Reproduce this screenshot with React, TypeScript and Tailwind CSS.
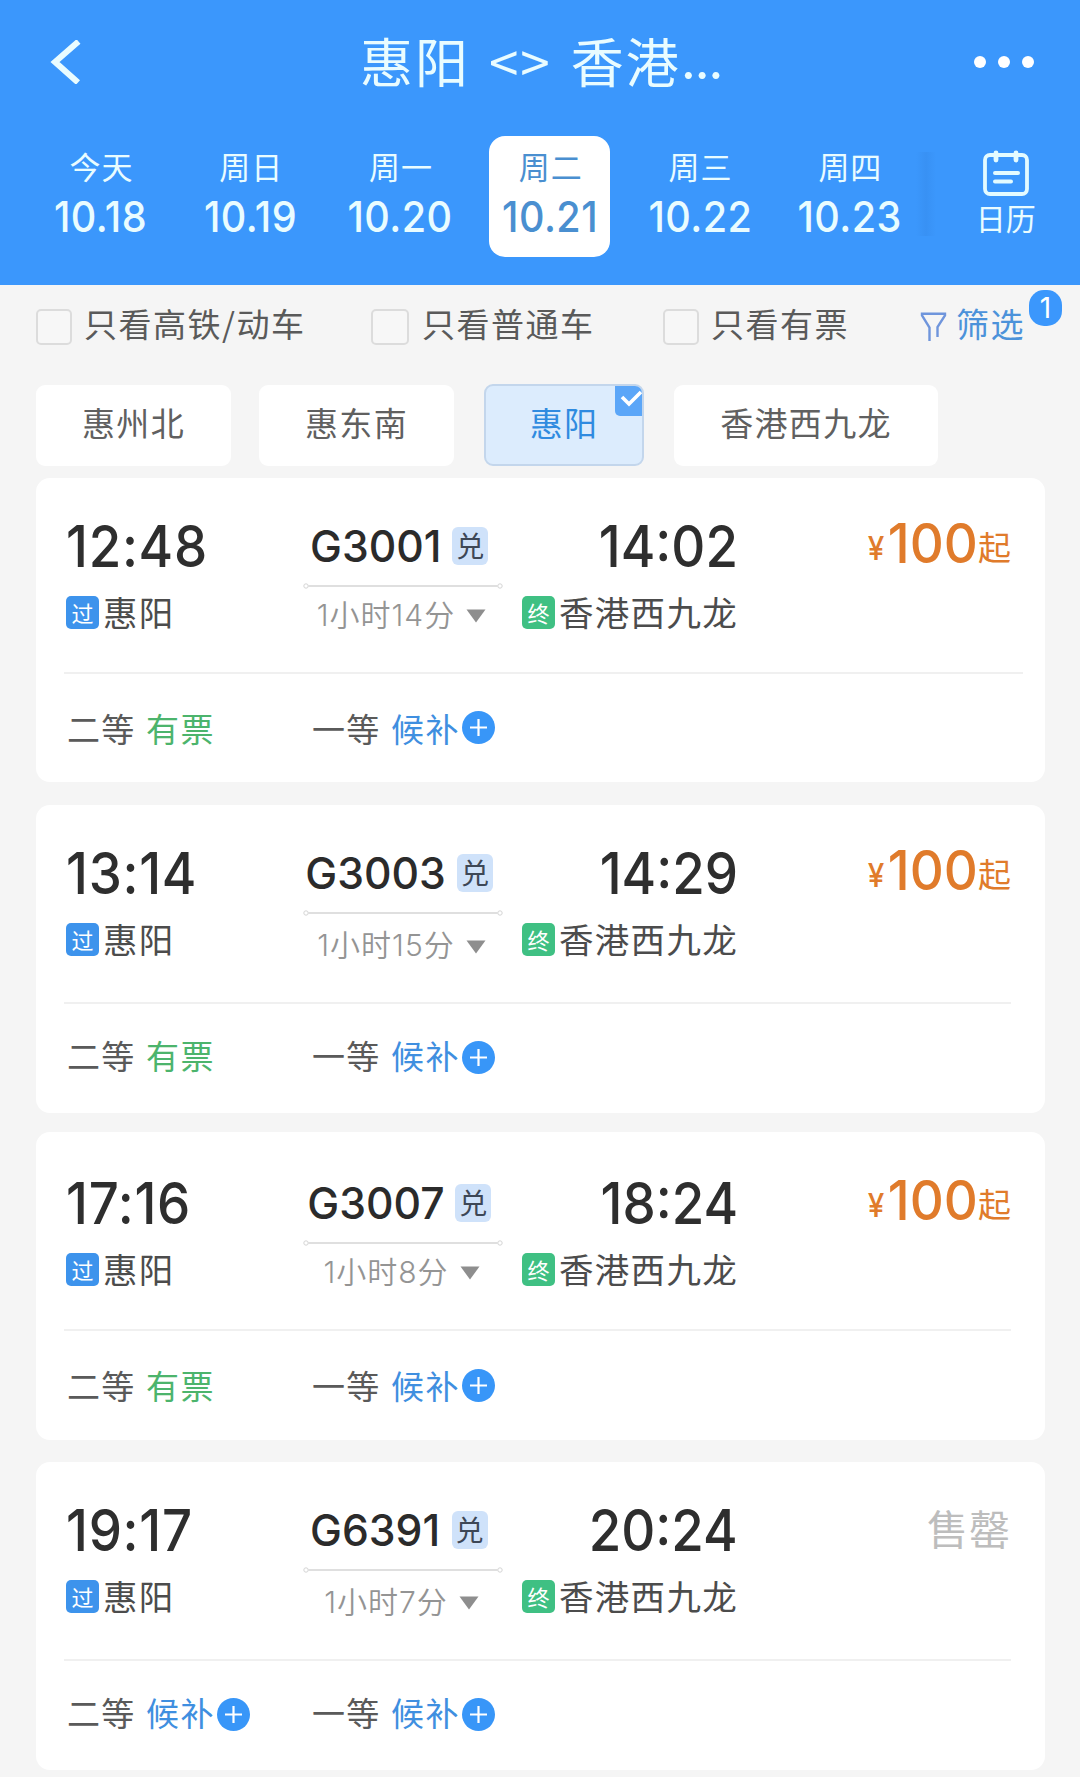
import clsx from 'clsx'

interface Seat {
  name: string
  waitlist: boolean
}

interface Train {
  no: string
  depart: string
  arrive: string
  duration: string
  price: number | null
  seats: Seat[]
  // vertical rhythm differs a little from card to card
  card: string
  top: string
  middle: string
  divider: string
  footer: string
  plus: string
}

const NUM = "font-['Inter','Noto_Sans_CJK_SC',sans-serif]"
const CJK = "font-['Noto_Sans_CJK_SC',sans-serif]"

const DAYS = [
  { label: '今天', date: '10.18' },
  { label: '周日', date: '10.19' },
  { label: '周一', date: '10.20' },
  { label: '周二', date: '10.21', active: true },
  { label: '周三', date: '10.22' },
  { label: '周四', date: '10.23' },
]

const TRAINS: Train[] = [
  {
    no: 'G3001', depart: '12:48', arrive: '14:02', duration: '1小时14分', price: 100,
    seats: [{ name: '二等', waitlist: false }, { name: '一等', waitlist: true }],
    card: 'h-[304px]', top: 'h-[194px]', middle: 'h-[54px]', divider: 'mr-[22px]', footer: 'h-[112px]', plus: '-mt-[1px]',
  },
  {
    no: 'G3003', depart: '13:14', arrive: '14:29', duration: '1小时15分', price: 100,
    seats: [{ name: '二等', waitlist: false }, { name: '一等', waitlist: true }],
    card: 'h-[308px] mt-[23px]', top: 'h-[197px]', middle: 'h-[61px]', divider: 'mr-[34px]', footer: 'h-[102px]', plus: 'mt-[4px]',
  },
  {
    no: 'G3007', depart: '17:16', arrive: '18:24', duration: '1小时8分', price: 100,
    seats: [{ name: '二等', waitlist: false }, { name: '一等', waitlist: true }],
    card: 'h-[308px] mt-[19px]', top: 'h-[197px] pt-[3px]', middle: 'h-[54px]', divider: 'mr-[34px]', footer: 'h-[112px]', plus: '-mt-[1px]',
  },
  {
    no: 'G6391', depart: '19:17', arrive: '20:24', duration: '1小时7分', price: null,
    seats: [{ name: '二等', waitlist: true }, { name: '一等', waitlist: true }],
    card: 'h-[308px] mt-[22px]', top: 'h-[197px]', middle: 'h-[60px]', divider: 'mr-[34px]', footer: 'h-[102px]', plus: 'mt-[4px]',
  },
]

function CalendarIcon() {
  return (
    <svg className="w-[46px] h-[46px] shrink-0" viewBox="0 0 46 46" fill="none" stroke="#e3fbff" strokeLinecap="round">
      <rect x="2" y="5" width="42" height="39" rx="5" strokeWidth="3.8" />
      <path d="M13 3v7M33 3v7" strokeWidth="4.8" />
      <path d="M12 23h23M12 31.5h16" strokeWidth="4" />
    </svg>
  )
}

function Checkbox({ label, className, box = 'w-[36px] mr-[12px]' }: { label: string; className?: string; box?: string }) {
  return (
    <label className={clsx('flex items-center', className)}>
      <span className={clsx('h-[36px] mt-[6px] rounded-[5px] border-[2.5px] border-[#dcdcdc] bg-[#f7f7f7]', box)} />
      <span className="pb-[2px] text-[33px] tracking-[1.5px] leading-none text-[#5a5a5a]">{label}</span>
    </label>
  )
}

function StationTab({ name, className, selected }: { name: string; className: string; selected?: boolean }) {
  return (
    <div
      className={clsx(
        'relative flex items-center justify-center rounded-[9px] text-[33px] tracking-[1.3px] leading-none pb-[6px]',
        className,
        selected ? 'h-[82px] border-2 border-[#c3d6ec] bg-[#dcecfd] text-[#2f8be0]' : 'h-[81px] bg-white text-[#606060]',
      )}
    >
      {name}
      {selected && (
        <svg className="absolute top-0 right-0 w-[27px] h-[30px]" viewBox="0 0 27 30" fill="none">
          <path d="M0 0h20a7 7 0 0 1 7 7v23H5a5 5 0 0 1-5-5z" fill="#5ba6f8" />
          <path d="M7 11l7 7L26 6" stroke="#fff" strokeWidth="3.6" />
        </svg>
      )}
    </div>
  )
}

function Station({ tag, name, color, className }: { tag: string; name: string; color: string; className?: string }) {
  return (
    <div className={clsx('flex items-center h-[33px]', className)}>
      <span className={clsx('w-[33px] h-[33px] rounded-[5px] flex items-center justify-center pb-[2px] text-[22px] leading-none text-white', color)}>
        {tag}
      </span>
      <span className="ml-[4px] -mt-[2px] text-[34.5px] tracking-[1.3px] leading-none text-[#4c4c4c] whitespace-nowrap">{name}</span>
    </div>
  )
}

function SeatInfo({ seat, plus, className }: { seat: Seat; plus: string; className?: string }) {
  return (
    <div className={clsx('flex items-center text-[33px] tracking-[1.3px] leading-none', className)}>
      <span className="text-[#5a5a5a]">{seat.name}</span>
      <span className={clsx('ml-[10.5px]', seat.waitlist ? 'text-[#3f8fe0]' : 'text-[#4cb46c]')}>
        {seat.waitlist ? '候补' : '有票'}
      </span>
      {seat.waitlist && (
        <svg className={clsx('w-[33px] h-[33px] ml-[2.5px]', plus)} viewBox="0 0 33 33" fill="none">
          <circle cx="16.5" cy="16.5" r="16.5" fill="#3896f8" />
          <path d="M8 16.5h17M16.5 8v17" stroke="#fff" strokeWidth="2.2" />
        </svg>
      )}
    </div>
  )
}

function Clock({ time, className }: { time: string; className?: string }) {
  return (
    <div className={clsx('h-[118px] pt-[38px] text-[58px] leading-[60px] font-medium text-[#2e2e2e] scale-x-[.91]', NUM, className)}>
      {time}
    </div>
  )
}

function TrainCard({ train }: { train: Train }) {
  return (
    <article className={clsx('w-[1009px] rounded-[14px] bg-white flex flex-col shrink-0', train.card)}>
      <div className={clsx('flex pl-[30px] shrink-0', train.top)}>
        <div className="w-[237px]">
          <Clock time={train.depart} className="origin-left tracking-[.8px]" />
          <Station tag="过" name="惠阳" color="bg-[#3d93ec]" />
        </div>

        <div className="w-[200px] flex flex-col items-center">
          <div className="h-[105px] pt-[30px] pr-[12px] flex items-center">
            <span className={clsx('text-[44px] leading-none font-medium text-[#2b2b2b] scale-x-[.97] origin-right', NUM)}>{train.no}</span>
            <span className="ml-[11px] w-[36px] h-[38px] rounded-[6px] bg-[#cfe2fa] text-[#3d4756] text-[28px] leading-none flex items-center justify-center pb-[1px]">
              兑
            </span>
          </div>
          <svg className="w-[200px] h-[6px] shrink-0" viewBox="0 0 200 6" fill="none" stroke="#d4d4d4">
            <path d="M5.5 3h189" strokeWidth="1.5" />
            <circle cx="3" cy="3" r="2.2" />
            <circle cx="197" cy="3" r="2.2" />
          </svg>
          <div className={clsx('flex items-center text-[#949494] pr-[3px]', train.middle)}>
            <span className={clsx('pb-[3px] text-[30px] leading-none font-[350] tracking-[1px]', NUM)}>{train.duration}</span>
            <svg className="w-[20px] h-[14px] ml-[11px]" viewBox="0 0 20 14">
              <path d="M.5 .5h19L10 13.5z" fill="#8e8e8e" />
            </svg>
          </div>
        </div>

        <div className="w-[233px] flex flex-col items-end">
          <Clock time={train.arrive} className="origin-right -mr-[2px]" />
          <Station tag="终" name="香港西九龙" color="bg-[#3fc083]" className="-mr-[2px]" />
        </div>

        <div className="flex-1 pr-[34px] pt-[38px] flex justify-end">
          {train.price === null ? (
            <span className="text-[41px] leading-[54px] tracking-[1px] text-[#bdbdbd]">售罄</span>
          ) : (
            <div className="flex items-baseline h-[60px] leading-[60px] text-[#e07b2b]">
              <span className={clsx('-translate-y-[3px] text-[33px] leading-none font-medium scale-x-90 origin-right', NUM)}>¥</span>
              <span className={clsx('text-[55px] leading-none font-medium scale-x-[.96] origin-right', NUM)}>{train.price}</span>
              <span className="-translate-y-[3px] text-[33px] leading-none">起</span>
            </div>
          )}
        </div>
      </div>

      <div className={clsx('h-[2px] ml-[28px] bg-[#f0f0f0] shrink-0', train.divider)} />

      <div className={clsx('flex items-center pl-[31px]', train.footer)}>
        {train.seats.map((seat, i) => (
          <SeatInfo key={seat.name} seat={seat} plus={train.plus} className={i === 0 ? 'w-[245px]' : undefined} />
        ))}
      </div>
    </article>
  )
}

export default function App() {
  return (
    <div className={clsx('w-[1080px] h-[1777px] overflow-hidden bg-[#f5f5f5] flex flex-col', CJK)}>
      <header className="h-[285px] shrink-0 bg-[#3b97fc] text-[#e9fcff]">
        <div className="h-[124px] grid grid-cols-[1fr_auto_1fr] items-center pl-[50px] pr-[46px]">
          <svg className="w-[32px] h-[44px]" viewBox="0 0 32 44" fill="none">
            <path d="M28.5 1.5L5 22l23 20.5" stroke="#e9fcff" strokeWidth="6" />
          </svg>
          <h1 className="text-[53px] leading-none tracking-[2px] -mt-[4px] -ml-[2px] flex items-center">
            <span>惠阳</span>
            <span className="mx-[19px]">&lt;&gt;</span>
            <span>香港</span>
            <span className={clsx('tracking-[-1.5px]', NUM)}>...</span>
          </h1>
          <svg className="w-[60px] h-[12px] justify-self-end" viewBox="0 0 60 12" fill="#fff">
            <circle cx="6" cy="6" r="6" />
            <circle cx="30" cy="6" r="6" />
            <circle cx="54" cy="6" r="6" />
          </svg>
        </div>

        <div className="mt-[12px] h-[121px] pl-[25px] flex">
          {DAYS.map((day) => (
            <div key={day.date} className="w-[149.8px] flex justify-center">
              <div
                className={clsx(
                  'w-[121px] h-[121px] rounded-[16px] flex flex-col items-center pt-[14px]',
                  day.active && 'bg-white text-[#4a8fd0]',
                )}
              >
                <span className="pl-[3px] text-[31px] leading-[32px] tracking-[1px]">{day.label}</span>
                <span className={clsx('pl-[2px] mt-[10px] text-[43px] leading-[48px] font-medium tracking-[.5px] scale-x-[.92]', NUM)}>{day.date}</span>
              </div>
            </div>
          ))}
          <div className="-ml-[8px] w-[20px] h-[84px] mt-[16px] bg-linear-to-r from-[#3b97fc] via-[#3891f4] to-[#3b97fc]" />
          <div className="ml-[40px] w-[60px] pt-[14px] flex flex-col items-center">
            <CalendarIcon />
            <span className="mt-[5px] text-[30px] leading-[32px] whitespace-nowrap">日历</span>
          </div>
        </div>
      </header>

      <div className="h-[78px] shrink-0 pl-[36px] flex items-center">
        <Checkbox label="只看高铁/动车" className="w-[335px]" />
        <Checkbox label="只看普通车" className="w-[292px]" box="w-[38px] mr-[13px]" />
        <Checkbox label="只看有票" className="w-[257px]" box="w-[36px] mr-[12px]" />
        <div className="relative flex items-center text-[#4c92da]">
          <svg className="w-[27px] h-[29px] mt-[4px]" viewBox="0 0 27 29" fill="none" stroke="#6f95dc" strokeWidth="2.4">
            <path d="M9.5 29V15.5L2 3.5V1.8h23v1.7L17.5 15v10" />
          </svg>
          <span className="ml-[9px] pb-[2px] text-[33px] tracking-[1.5px] leading-none">筛选</span>
          <span className={clsx('absolute left-[109px] -top-[17px] w-[33px] h-[36px] rounded-[15px] bg-[#3b97fc] text-white text-[28px] leading-[36px] text-center', NUM)}>
            1
          </span>
        </div>
      </div>

      <div className="mt-[21px] h-[82px] shrink-0 pl-[36px] flex items-center">
        <StationTab name="惠州北" className="w-[195px]" />
        <StationTab name="惠东南" className="w-[195px] ml-[28px]" />
        <StationTab name="惠阳" className="w-[160px] ml-[30px]" selected />
        <StationTab name="香港西九龙" className="w-[264px] ml-[30px]" />
      </div>

      <main className="mt-[12px] pl-[36px] flex flex-col">
        {TRAINS.map((train) => (
          <TrainCard key={train.no} train={train} />
        ))}
      </main>
    </div>
  )
}
